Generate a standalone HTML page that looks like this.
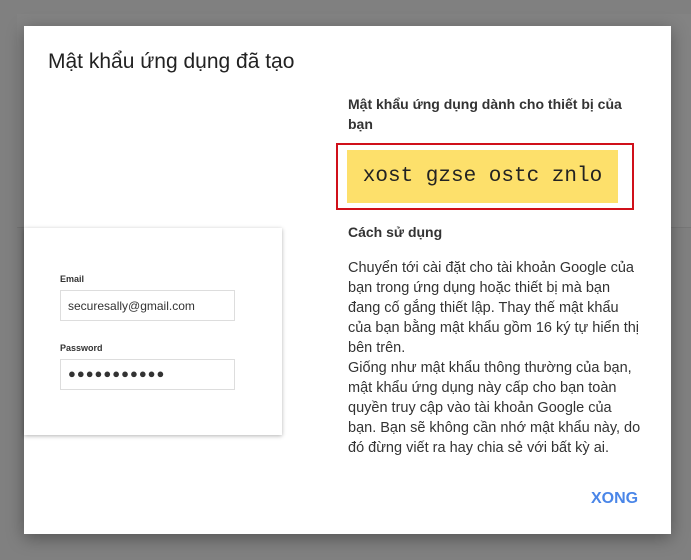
<!DOCTYPE html>
<html><head><meta charset="utf-8"><style>
*{margin:0;padding:0;box-sizing:border-box}
body{width:691px;height:560px;background:#808080;position:relative;overflow:hidden;font-family:"Liberation Sans","Noto Sans CJK SC",sans-serif;color:#212121}
.bg{position:absolute;left:17px;top:14px;width:700px;height:214px;background:#838383;border-bottom:1px solid #777}
.dlg{position:absolute;left:24px;top:26px;width:647px;height:508px;background:#fff;box-shadow:0 4px 16px rgba(0,0,0,.35)}
.t{position:absolute;left:24px;top:24px;font-size:21px;color:#222}
.card{position:absolute;left:0;top:202px;width:258px;height:207px;background:#fff;box-shadow:0 1px 4px rgba(0,0,0,.3)}
.lbl{position:absolute;left:36px;font-size:9px;font-weight:bold;color:#333}
.in{position:absolute;left:36px;width:175px;height:31px;border:1px solid #ddd;font-size:12px;padding:8px 0 0 7px;color:#333}
.h{position:absolute;left:324px;font-size:14px;font-weight:bold;line-height:20px;color:#333}
.red{position:absolute;left:312px;top:117px;width:298px;height:67px;border:2px solid #d0101a}
.yel{position:absolute;left:323px;top:124px;width:271px;height:53px;background:#fde06b;font-family:"Liberation Mono","DejaVu Sans Mono",monospace;font-size:21px;line-height:53px;text-align:center;color:#222}
.p{position:absolute;left:324px;top:232px;width:320px;font-size:14.5px;line-height:20px;color:#333;white-space:nowrap}
.ok{position:absolute;left:567px;top:464px;font-size:16px;font-weight:bold;color:#4a86e8}
</style></head><body>
<div class="bg"></div>
<div class="dlg">
<div class="t">Mật khẩu ứng dụng đã tạo</div>
<div class="card">
<div class="lbl" style="top:46px">Email</div>
<div class="in" style="top:62px">securesally@gmail.com</div>
<div class="lbl" style="top:115px">Password</div>
<div class="in" style="top:131px;font-size:13px;padding-top:6px;letter-spacing:1px">●●●●●●●●●●●</div>
</div>
<div class="h" style="top:68px;width:300px">Mật khẩu ứng dụng dành cho thiết bị của bạn</div>
<div class="red"></div>
<div class="yel">xost gzse ostc znlo</div>
<div class="h" style="top:196px">Cách sử dụng</div>
<div class="p">Chuyển tới cài đặt cho tài khoản Google của<br>bạn trong ứng dụng hoặc thiết bị mà bạn<br>đang cố gắng thiết lập. Thay thế mật khẩu<br>của bạn bằng mật khẩu gồm 16 ký tự hiển thị<br>bên trên.<br>Giống như mật khẩu thông thường của bạn,<br>mật khẩu ứng dụng này cấp cho bạn toàn<br>quyền truy cập vào tài khoản Google của<br>bạn. Bạn sẽ không cần nhớ mật khẩu này, do<br>đó đừng viết ra hay chia sẻ với bất kỳ ai.</div>
<div class="ok">XONG</div>
</div>
</body></html>
